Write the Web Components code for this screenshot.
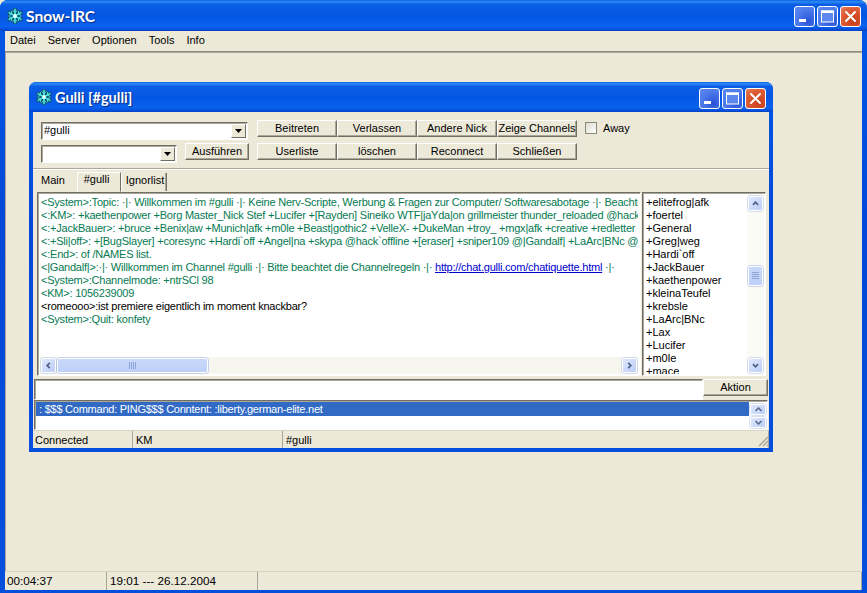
<!DOCTYPE html>
<html><head><meta charset="utf-8"><title>Snow-IRC</title>
<style>
html,body{margin:0;padding:0;background:#ece9d8;overflow:hidden}
body{font:11px "Liberation Sans","Noto Sans",sans-serif;color:#000}
</style></head><body>
<xp-window id="main" caption="Snow-IRC" style="width:867px;height:593px;--bw:5px;--bb:3px;--tb:31px;--title:15.6px;--icon-l:7px;--btn-r:6px;--top-r:8px">
  <xp-menu><span>Datei</span><span>Server</span><span>Optionen</span><span>Tools</span><span>Info</span></xp-menu>
  <mdi-desk>
    <xp-window id="child" caption="Gulli [#gulli]" style="position:absolute;left:24px;top:30px;width:744px;height:370px;--bw:4px;--bb:4px;--tb:30px;--title:14.5px;--icon-l:7px;--btn-r:7px;--top-r:7px">
      <chat-view></chat-view>
    </xp-window>
  </mdi-desk>
  <status-bar big cols="102px 150px 1fr"><span>00:04:37</span><span>19:01 --- 26.12.2004</span><span></span></status-bar>
</xp-window>
<script>
const def=(n,css,html,ext={})=>{customElements.define(n,class extends HTMLElement{
  constructor(){super();this.attachShadow({mode:'open'}).innerHTML=`<style>${css}</style>${html}`;}
  connectedCallback(){ext.init&&ext.init.call(this);}
});};
const flake='M8 1.2v13.6M2.1 4.6l11.8 6.8M13.9 4.6L2.1 11.4';
const ticks='M5.8 2.6L8 4.6l2.2-2M5.8 13.4L8 11.4l2.2 2M2.2 7.2L4.9 6.2 4.3 3.4M13.8 7.2L11.1 6.2l.6-2.8M2.2 8.8l2.7 1-.6 2.8M13.8 8.8l-2.7 1 .6 2.8';
const snow=`<svg viewBox="0 0 16 16" width="16" height="16"><g stroke="#12506e" stroke-linecap="round" fill="none"><path d="${flake}" stroke-width="3.4"/><path d="${ticks}" stroke-width="2.4"/></g><g stroke="#4fe8e0" stroke-linecap="round" fill="none"><path d="${flake}" stroke-width="1.6"/><path d="${ticks}" stroke-width="1"/></g><circle cx="8" cy="8" r="2" fill="#d8fffb"/></svg>`;
def('xp-window',`
:host{display:flex;flex-direction:column;box-sizing:border-box;background:linear-gradient(#0058e6,#0348d8 40%,#0450dc);border-radius:var(--top-r) var(--top-r) 0 0;overflow:hidden}
.tb{flex:none;height:var(--tb);display:flex;align-items:center;padding-left:var(--icon-l);padding-right:var(--btn-r);
 background:linear-gradient(#0a63e8 0,#2f8bf5 6%,#0b5ee6 14%,#0556e2 50%,#0a62ee 85%,#0650dc 95%,#033fc4 100%);color:#fff}
.ic{flex:none;display:flex;margin-right:3px}
.cap{flex:1;font:bold var(--title) "Lato","Open Sans",sans-serif;text-shadow:1px 1px 1px #0a2a8a;white-space:nowrap}
.b{flex:none;width:21px;height:21px;box-sizing:border-box;border:1px solid #fff;border-radius:3px;margin:2px 0 0 2px;
 background:radial-gradient(circle at 70% 75%,#2a53d8,#4a78ea 55%,#5f8cf0)}
.b.x{background:radial-gradient(circle at 70% 75%,#c8401c,#dd5a32 60%,#e6825e)}
.b svg{display:block;width:19px;height:19px}
.cl{flex:1;min-height:0;margin:0 var(--bw) var(--bb);background:#ece9d8;display:flex;flex-direction:column}
`,`<div class="tb"><span class="ic">${snow}</span><span class="cap"></span>
<span class="b"><svg viewBox="0 0 19 19"><rect x="4" y="12" width="7" height="3" fill="#fff"/></svg></span>
<span class="b"><svg viewBox="0 0 19 19"><rect x="3.5" y="4" width="12" height="11" fill="#5c88ee" stroke="#fff" stroke-width="1"/><rect x="3" y="3.5" width="13" height="2.5" fill="#fff"/></svg></span>
<span class="b x"><svg viewBox="0 0 19 19"><path d="M5 5l9 9M14 5l-9 9" stroke="#fff" stroke-width="2" stroke-linecap="round"/></svg></span></div>
<div class="cl"><slot></slot></div>`,{init(){this.shadowRoot.querySelector('.cap').textContent=this.getAttribute('caption');}});
def('xp-menu',`:host{display:flex;flex:none;height:18px;padding:0 0 2px 5px;align-items:center;gap:12px;border-bottom:1px solid #8f8c7c;box-shadow:0 1px 0 #fff;font-size:11px}`,`<slot></slot>`);
def('mdi-desk',`:host{display:block;flex:1;position:relative;min-height:0;box-shadow:inset 1px 1px 0 #aca899}`,`<slot></slot>`);
def('status-bar',`:host{display:grid;flex:none;height:19px;align-items:stretch;column-gap:1px;box-sizing:border-box;border-top:1px solid #d8d4c2;font-size:11px;line-height:18px}
:host([big]){font-size:11.7px}
::slotted(span){padding-left:2px;border-right:1px solid #aca899;white-space:nowrap;overflow:hidden}`,`<slot></slot>`,{init(){this.style.gridTemplateColumns=this.getAttribute('cols');}});
def('xp-button',`:host{display:flex;align-items:center;justify-content:center;box-sizing:border-box;height:17px;padding-bottom:1px;background:#ece9d8;border:1px solid;border-color:#fff #716f64 #716f64 #fff;box-shadow:inset -1px -1px 0 #aca899;font-size:11px;white-space:nowrap}`,`<slot></slot>`);
def('xp-combo',`:host{display:flex;box-sizing:border-box;height:18px;background:#fff;border:1px solid;border-color:#716f64 #fff #fff #716f64;box-shadow:inset 1px 1px 0 #aca899;font-size:11px;line-height:12px;padding:1px 1px 1px 2px}
.t{flex:1;overflow:hidden}.a{flex:none;width:15px;background:#ece9d8;border:1px solid;border-color:#fff #716f64 #716f64 #fff;box-sizing:border-box;display:flex;align-items:center;justify-content:center}`,
`<span class="t"><slot></slot></span><span class="a"><svg width="7" height="4" viewBox="0 0 7 4"><path d="M0 0h7L3.5 4z" fill="#000"/></svg></span>`);
const arrow={up:'M3 9l4-4 4 4',down:'M3 5l4 4 4-4',left:'M9 3L5 7l4 4',right:'M5 3l4 4-4 4'};
const sb=d=>`<span class="sb"><svg width="9" height="9" viewBox="0 0 14 14"><path d="${arrow[d]}" fill="none" stroke="#4d6185" stroke-width="2.6"/></svg></span>`;
def('xp-scroll',`:host{display:flex;flex:none;box-sizing:border-box;background:#f7f6ee;padding:1px}
:host([orient=h]){flex-direction:row;height:17px}
:host([orient=v]){flex-direction:column;width:17px;background:#fbfbf6}
.sb{flex:none;box-sizing:border-box;width:15px;height:15px;border:1px solid #fff;border-radius:2px;background:linear-gradient(135deg,#dfe8fd,#bccdf6);display:flex;align-items:center;justify-content:center;box-shadow:0 0 0 .5px #aebde0}
.th{flex:none;box-sizing:border-box;border:1px solid #fff;border-radius:2px;background:linear-gradient(#c9d8fa,#bdd0f8);box-shadow:0 0 0 .5px #98ade0;display:flex;align-items:center;justify-content:center;color:#8fa5d8}
.sp{flex:none}.fl{flex:1}`,``,{init(){
 const o=this.getAttribute('orient'),a=this.getAttribute('start'),s=this.getAttribute('size');
 const h=o==='h',st=h?`width:${a}px`:`height:${a}px`,ts=h?`width:${s}px`:`height:${s}px`;
 const grip=h?`<svg width="8" height="7"><path d="M.5 0v7M2.5 0v7M4.5 0v7M6.5 0v7" stroke="#8fa5d8"/></svg>`:`<svg width="7" height="8"><path d="M0 .5h7M0 2.5h7M0 4.5h7M0 6.5h7" stroke="#8fa5d8"/></svg>`;
 this.shadowRoot.innerHTML+=`${sb(h?'left':'up')}<span class="sp" style="${st}"></span><span class="th" style="${ts}">${grip}</span><span class="fl"></span>${sb(h?'right':'down')}`;
}});
def('chat-view',`
:host{display:flex;flex-direction:column;flex:1;min-height:0;font-size:11px}
.tools{flex:none;height:57px;box-sizing:border-box;border-bottom:1px solid #aca899;box-shadow:0 1px 0 #fff;padding:8px 0 0 8px;display:flex;flex-direction:column;gap:3px}
.r{display:flex;align-items:flex-start}
.bs{display:flex}.bs xp-button{width:80px}
.tabs{flex:none;display:flex;align-items:flex-end;height:23px;padding:1px 0 1px 3px;box-sizing:border-box}
.tab{box-sizing:border-box;height:18px;line-height:15px;border-right:1px solid #716f64}
.tab.m{width:41px;padding-left:5px;border:0}
.tab.a{width:44px;height:20px;text-align:center;background:#ece9d8;border:1px solid;border-color:#fff #716f64 #ece9d8 #fff;margin-bottom:-1px;line-height:13px;padding-right:5px}
.tab.i{width:46px;text-align:center;border-left:1px solid #fff;box-shadow:inset -1px 0 0 #aca899;padding-left:2px}
.mid{flex:none;height:184px;margin:0 3px 0 4px;display:flex;gap:1px}
.sunk{box-sizing:border-box;border:1px solid;border-color:#716f64 #fff #fff #716f64;box-shadow:inset 1px 1px 0 #aca899;background:#fff;display:flex;overflow:hidden;padding:2px}
.log{flex:none;width:604px;flex-direction:column;padding-bottom:1px}
.txt{flex:1;min-height:0;overflow:hidden;padding:1px 0 0 1px;line-height:13px;white-space:nowrap;color:#067a52;letter-spacing:-.22px}
.txt div{height:13px}.txt .k{color:#000}.txt a{color:#0000d0;text-decoration:underline}
.lst{flex:1;padding:2px 1px 1px 2px}
.names{flex:1;overflow:hidden;line-height:13px;padding:1px 0 0 1px}
.names div{height:13px}
.inp{flex:none;height:21px;margin:3px 1px 0 1px;display:flex}
.inp .sunk{flex:1;padding:0}
.inp xp-button{width:65px}
.out{flex:none;height:30px;margin:0 1px;flex-direction:row;padding:1px 1px 1px 1px;font-size:11px}
.rows{flex:1;min-width:0}.sel{height:14px;line-height:14px;background:#316ac5;color:#fff;padding-left:3px;white-space:nowrap;letter-spacing:-.24px}
.mini{flex:none;width:16px;display:flex;flex-direction:column;gap:2px;margin-left:1px;padding-top:2px}
.mini span{height:11px;box-sizing:border-box;border:1px solid #fff;border-radius:2px;background:linear-gradient(135deg,#dfe8fd,#bccdf6);display:flex;align-items:center;justify-content:center;box-shadow:0 0 0 .5px #aebde0}
.foot{position:relative;flex:1;min-height:0;display:flex}
.foot status-bar{flex:1;height:auto}
.grip{position:absolute;right:0;bottom:1px}
.cb{display:flex;align-items:center;margin:2px 0 0 8px;gap:6px}.cb i{width:10px;height:10px;border:1px solid #8a8a7a;background:linear-gradient(135deg,#dcdcd2,#fff);display:block}
`,`
<div class="tools">
 <div class="r"><xp-combo style="width:207px;margin:2px 9px 0 0">#gulli</xp-combo>
  <div class="bs"><xp-button>Beitreten</xp-button><xp-button>Verlassen</xp-button><xp-button>Andere Nick</xp-button><xp-button>Zeige Channels</xp-button></div>
  <span class="cb"><i></i>Away</span></div>
 <div class="r"><xp-combo style="width:136px;margin:2px 8px 0 0">&nbsp;</xp-combo>
  <xp-button style="width:64px;margin-right:8px">Ausführen</xp-button>
  <div class="bs"><xp-button>Userliste</xp-button><xp-button>löschen</xp-button><xp-button>Reconnect</xp-button><xp-button>Schließen</xp-button></div></div>
</div>
<div class="tabs"><span class="tab m">Main</span><span class="tab a">#gulli</span><span class="tab i">Ignorlist</span></div>
<div class="mid">
 <div class="sunk log"><div class="txt">
  <div>&lt;System&gt;:Topic: ·|· Willkommen im #gulli ·|· Keine Nerv-Scripte, Werbung &amp; Fragen zur Computer/ Softwaresabotage ·|· Beachtet</div>
  <div>&lt;:KM&gt;: +kaethenpower +Borg Master_Nick Stef +Lucifer +[Rayden] Sineiko WTF|jaYda|on grillmeister thunder_reloaded @hack</div>
  <div>&lt;:+JackBauer&gt;: +bruce +Benix|aw +Munich|afk +m0le +Beast|gothic2 +VelleX- +DukeMan +troy_ +mgx|afk +creative +redletter</div>
  <div>&lt;:+Sli|off&gt;: +[BugSlayer] +coresync +Hardi&#96;off +Angel|na +skypa @hack&#96;offline +[eraser] +sniper109 @|Gandalf| +LaArc|BNc @|</div>
  <div>&lt;:End&gt;: of /NAMES list.</div>
  <div>&lt;|Gandalf|&gt;:·|· Willkommen im Channel #gulli ·|· Bitte beachtet die Channelregeln ·|· <a>http://chat.gulli.com/chatiquette.html</a> ·|·</div>
  <div>&lt;System&gt;:Channelmode: +ntrSCl 98</div>
  <div>&lt;KM&gt;: 1056239009</div>
  <div class="k">&lt;romeooo&gt;:ist premiere eigentlich im moment knackbar?</div>
  <div>&lt;System&gt;:Quit: konfety</div>
 </div><xp-scroll orient="h" start="1" size="151"></xp-scroll></div>
 <div class="sunk lst"><div class="names">
  <div>+elitefrog|afk</div><div>+foertel</div><div>+General</div><div>+Greg|weg</div><div>+Hardi&#96;off</div><div>+JackBauer</div><div>+kaethenpower</div><div>+kleinaTeufel</div><div>+krebsle</div><div>+LaArc|BNc</div><div>+Lax</div><div>+Lucifer</div><div>+m0le</div><div>+mace</div>
 </div><xp-scroll orient="v" start="55" size="20"></xp-scroll></div>
</div>
<div class="inp"><div class="sunk"></div><xp-button>Aktion</xp-button></div>
<div class="sunk out"><div class="rows"><div class="sel">: $$$ Command: PING$$$ Conntent: :liberty.german-elite.net</div></div>
 <div class="mini"><span><svg width="7" height="5" viewBox="0 0 7 5"><path d="M.5 4l3-3 3 3" fill="none" stroke="#4d6185" stroke-width="1.4"/></svg></span><span><svg width="7" height="5" viewBox="0 0 7 5"><path d="M.5 1l3 3 3-3" fill="none" stroke="#4d6185" stroke-width="1.4"/></svg></span></div></div>
<div class="foot"><status-bar cols="100px 149px 1fr"><span>Connected</span><span>KM</span><span>#gulli</span></status-bar>
 <svg class="grip" width="12" height="12"><path d="M11 2L2 11M11 6L6 11M11 10L10 11" stroke="#aca899" stroke-width="1.5"/></svg></div>
`);
</script>
</body></html>
